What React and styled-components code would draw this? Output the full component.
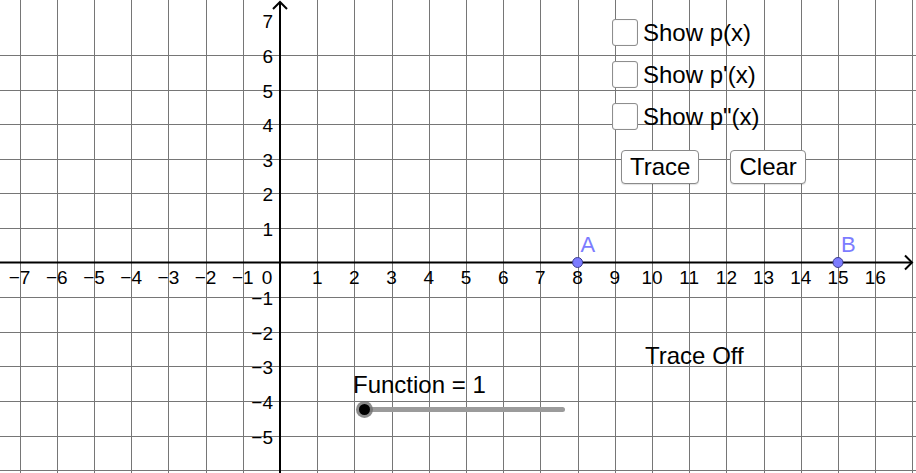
import React from 'react';
import styled, { createGlobalStyle } from 'styled-components';

const GlobalStyle = createGlobalStyle`
  html, body {
    margin: 0;
    padding: 0;
    background: #fff;
    overflow: hidden;
  }
  body {
    font-family: "Liberation Sans", Arial, sans-serif;
  }
`;

// graph geometry (pixels per unit differ on the two axes)
const W = 916;
const H = 473;
const X0 = 280;
const Y0 = 262.5;
const SX = 37.2;
const SY = 34.6;

const px = (v) => X0 + v * SX;
const py = (v) => Y0 - v * SY;
const crisp = (v) => Math.round(v) + 0.5;
const label = (n) => (n < 0 ? `\u2212${-n}` : `${n}`);

const range = (a, b) => Array.from({ length: b - a + 1 }, (_, i) => a + i);

const Canvas = styled.div`
  position: relative;
  width: ${W}px;
  height: ${H}px;
  overflow: hidden;
  background: #fff;
  color: #000;
  user-select: none;
`;

const Graph = styled.svg`
  display: block;
  font-family: "Liberation Sans", Arial, sans-serif;
`;

const Controls = styled.div`
  position: absolute;
  left: 612px;
  top: 19px;
  display: flex;
  flex-direction: column;
  gap: 15px;
`;

const CheckRow = styled.label`
  display: flex;
  align-items: flex-start;
  gap: 5px;
  height: 27px;
  cursor: pointer;
`;

const Box = styled.span`
  box-sizing: border-box;
  width: 26px;
  height: 27px;
  border: 1px solid #8e8e8e;
  border-radius: 3px;
  background: #fff;
  box-shadow: inset 0 0 1px rgba(0, 0, 0, 0.25);
`;

const CheckText = styled.span`
  font-size: 24px;
  line-height: 27px;
  white-space: nowrap;
`;

const ButtonRow = styled.div`
  display: flex;
  gap: 31px;
  margin-left: 9px;
  margin-top: 5px;
`;

const Button = styled.button`
  box-sizing: border-box;
  height: 34px;
  padding: 0 8px;
  border: 1px solid #8a8a8a;
  border-radius: 4px;
  background: #fff;
  font-family: "Liberation Sans", Arial, sans-serif;
  font-size: 24px;
  line-height: 32px;
  color: #000;
  box-shadow: 0 1px 1px rgba(0, 0, 0, 0.12);
  cursor: pointer;
`;

const FreeText = styled.div`
  position: absolute;
  left: ${(p) => p.$x}px;
  top: ${(p) => p.$y}px;
  font-size: 24px;
  line-height: 27px;
  white-space: nowrap;
`;

const SliderBox = styled.div`
  position: absolute;
  left: 353px;
  top: 371px;
  display: flex;
  flex-direction: column;
`;

const SliderCaption = styled.div`
  font-size: 24px;
  line-height: 27px;
  white-space: nowrap;
`;

const Track = styled.div`
  position: relative;
  width: 201px;
  height: 5px;
  margin: 9px 0 0 11px;
  border-radius: 3px;
  background: #9b9b9b;
`;

const Knob = styled.div`
  position: absolute;
  left: -5.5px;
  top: -3px;
  width: 11px;
  height: 11px;
  border-radius: 50%;
  background: #000;
  box-shadow: 0 0 0 3px rgba(110, 110, 110, 0.8);
`;

const points = [
  { name: 'A', x: 8 },
  { name: 'B', x: 15 },
];

function Axes() {
  const xs = range(-7, 17).filter((k) => k !== 0);
  const ys = range(-7, 6).filter((k) => k !== 0);
  return (
    <Graph width={W} height={H} viewBox={`0 0 ${W} ${H}`}>
      <g stroke="#767676" strokeWidth="1">
        {xs.map((k) => (
          <line key={`v${k}`} x1={crisp(px(k))} y1="0" x2={crisp(px(k))} y2={H} />
        ))}
        {ys.map((k) => (
          <line key={`h${k}`} x1="0" y1={crisp(py(k))} x2={W} y2={crisp(py(k))} />
        ))}
      </g>

      <g stroke="#000" strokeWidth="2" fill="none">
        <line x1="0" y1={Y0} x2="912" y2={Y0} />
        <line x1={X0} y1={H} x2={X0} y2="2" />
        <polyline points={`905,${Y0 - 7} 912,${Y0} 905,${Y0 + 7}`} />
        <polyline points={`${X0 - 7},9 ${X0},2 ${X0 + 7},9`} />
      </g>

      <g fontSize="19" fill="#000" textAnchor="middle">
        {range(-7, 16)
          .filter((k) => k !== 0)
          .map((k) => (
            <text key={`xl${k}`} x={px(k)} y="284">
              {label(k)}
            </text>
          ))}
        <text x="267" y="284">0</text>
      </g>

      <g fontSize="19" fill="#000" textAnchor="end">
        {range(-5, 7)
          .filter((k) => k !== 0)
          .map((k) => (
            <text key={`yl${k}`} x="273" y={py(k) + 8}>
              {label(k)}
            </text>
          ))}
      </g>

      {points.map((p) => (
        <g key={p.name}>
          <circle cx={px(p.x)} cy={Y0} r="5" fill="#7c7cff" stroke="#3d3d8f" strokeWidth="1" />
          <text x={px(p.x) + 3} y="252" fontSize="22" fill="#7c7cff">
            {p.name}
          </text>
        </g>
      ))}
    </Graph>
  );
}

const checks = ['Show p(x)', "Show p'(x)", 'Show p"(x)'];

export default function App() {
  return (
    <>
      <GlobalStyle />
      <Canvas>
        <Axes />

        <Controls>
          {checks.map((t) => (
            <CheckRow key={t}>
              <Box />
              <CheckText>{t}</CheckText>
            </CheckRow>
          ))}
          <ButtonRow>
            <Button>Trace</Button>
            <Button>Clear</Button>
          </ButtonRow>
        </Controls>

        <FreeText $x={645} $y={342}>
          Trace Off
        </FreeText>

        <SliderBox>
          <SliderCaption>Function = 1</SliderCaption>
          <Track>
            <Knob />
          </Track>
        </SliderBox>
      </Canvas>
    </>
  );
}
